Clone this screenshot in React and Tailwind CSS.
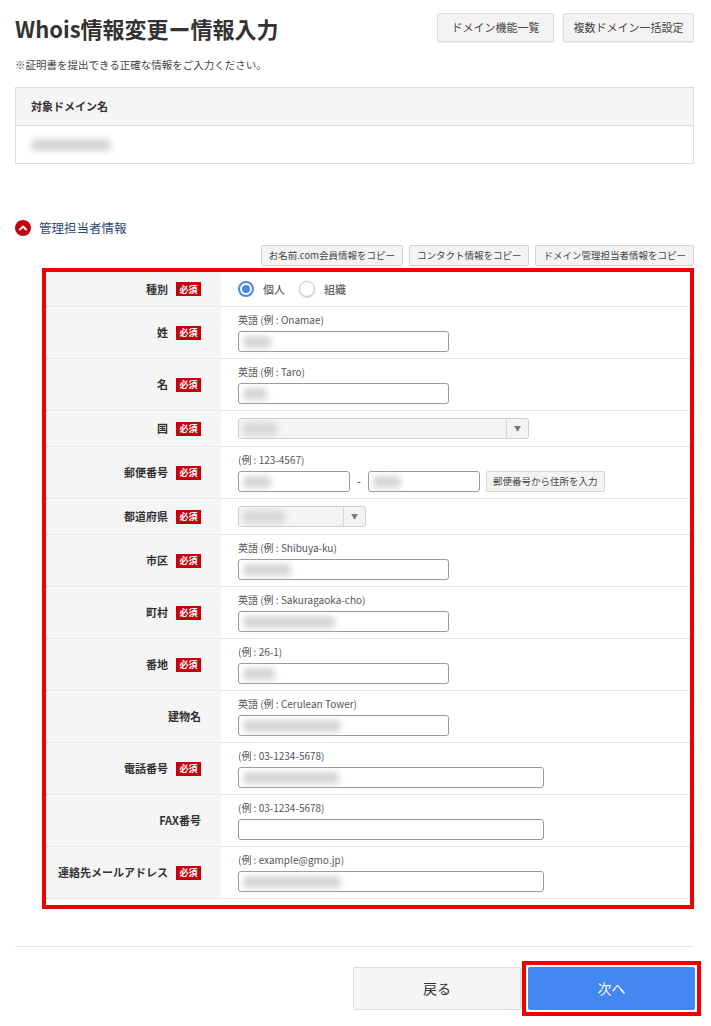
import { ChevronUp } from "lucide-react";

const font = { fontFamily: '"Noto Sans CJK JP", "Noto Sans", sans-serif' };

function Blur({ w }) {
  return <div className="h-[12px] rounded-sm bg-[#d6d6d6] blur-[3px]" style={{ width: w }} />;
}

function Badge() {
  return (
    <span className="ml-[8px] inline-flex h-[14px] w-[25px] items-center justify-center bg-[#c4000b] text-[9px] leading-none text-white">
      必須
    </span>
  );
}

function TextInput({ w = 211, blur }) {
  return (
    <div
      className="flex h-[21px] items-center rounded-[3px] border border-[#999] bg-white px-[4px]"
      style={{ width: w }}
    >
      {blur ? <Blur w={blur} /> : null}
    </div>
  );
}

function Select({ w, blur }) {
  return (
    <div
      className="flex h-[21px] items-center rounded-[3px] border border-[#d0d0d0] bg-[#f4f4f4]"
      style={{ width: w }}
    >
      <div className="flex flex-1 items-center px-[4px]">
        <Blur w={blur} />
      </div>
      <div className="flex h-full w-[22px] items-center justify-center border-l border-[#d6d6d6] text-[7px] text-[#777]">
        ▼
      </div>
    </div>
  );
}

function Row({ label, required, hint, tall = true, children }) {
  return (
    <div className="flex border-b border-dotted border-[#cfcfcf]">
      <div className="flex w-[175px] shrink-0 items-center justify-end bg-[#f5f5f5] pr-[20px] text-[11px] font-bold text-[#333]">
        <span>{label}</span>
        {required ? <Badge /> : null}
      </div>
      <div className={`flex-1 pl-[17px] ${tall ? "py-[6px]" : "py-[7px]"}`}>
        {hint ? (
          <div className="mb-[4px] text-[10px] leading-[14px] text-[#555]">{hint}</div>
        ) : null}
        {children}
      </div>
    </div>
  );
}

function SmallButton({ children }) {
  return (
    <button className="h-[21px] rounded-[2px] border border-[#d4d4d4] bg-[#f3f3f3] px-[7px] text-[9.5px] text-[#444]">
      {children}
    </button>
  );
}

export default function App() {
  return (
    <div className="min-h-[1026px] w-[711px] bg-white pl-[15px] pr-[17px] pt-[13px] text-[#333]" style={font}>
      <div className="flex items-start justify-between">
        <h1 className="mt-[1px] text-[22px] font-bold leading-[28px] text-[#333]">
          Whois情報変更ー情報入力
        </h1>
        <div className="flex gap-[9px]">
          <button className="h-[29px] w-[117px] rounded-[2px] border border-[#ddd] bg-[#f3f3f3] text-[11px] text-[#444] shadow-[0_1px_1px_rgba(0,0,0,0.08)]">
            ドメイン機能一覧
          </button>
          <button className="h-[29px] w-[131px] rounded-[2px] border border-[#ddd] bg-[#f3f3f3] text-[11px] text-[#444] shadow-[0_1px_1px_rgba(0,0,0,0.08)]">
            複数ドメイン一括設定
          </button>
        </div>
      </div>

      <p className="mt-[16px] text-[10.5px] leading-[14px] text-[#444]">
        ※証明書を提出できる正確な情報をご入力ください。
      </p>

      <div className="mt-[15px] border border-[#ddd]">
        <div className="flex h-[38px] items-center border-b border-[#ddd] bg-[#f5f5f5] px-[15px] text-[11px] font-bold">
          対象ドメイン名
        </div>
        <div className="flex h-[37px] items-center px-[15px]">
          <Blur w={80} />
        </div>
      </div>

      <div className="mt-[55px] flex items-center gap-[8px]">
        <span className="flex h-[16px] w-[16px] items-center justify-center rounded-full bg-[#c4000b] text-white">
          <ChevronUp size={12} strokeWidth={4} />
        </span>
        <span className="text-[12.5px] leading-[18px] text-[#2b4a78]">管理担当者情報</span>
      </div>

      <div className="mt-[8px] flex justify-end gap-[6px]">
        <SmallButton>お名前.com会員情報をコピー</SmallButton>
        <SmallButton>コンタクト情報をコピー</SmallButton>
        <SmallButton>ドメイン管理担当者情報をコピー</SmallButton>
      </div>

      <div className="ml-[27px] mt-[2px] border-[4px] border-[#ee0000] pb-[6px]">
        <Row label="種別" required tall={false}>
          <div className="flex h-[20px] items-center text-[11px] text-[#444]">
            <span className="flex h-[16px] w-[16px] items-center justify-center rounded-full border-2 border-[#4a86e8] bg-white">
              <span className="h-[8px] w-[8px] rounded-full bg-[#4a86e8]" />
            </span>
            <span className="ml-[9px]">個人</span>
            <span className="ml-[14px] h-[16px] w-[16px] rounded-full border border-[#c8c8c8] bg-white shadow-[0_1px_2px_rgba(0,0,0,0.15)]" />
            <span className="ml-[9px]">組織</span>
          </div>
        </Row>
        <Row label="姓" required hint="英語 (例 : Onamae)">
          <TextInput blur={28} />
        </Row>
        <Row label="名" required hint="英語 (例 : Taro)">
          <TextInput blur={24} />
        </Row>
        <Row label="国" required tall={false}>
          <Select w={291} blur={34} />
        </Row>
        <Row label="郵便番号" required hint="(例 : 123-4567)">
          <div className="flex items-center">
            <TextInput w={112} blur={28} />
            <span className="mx-[7px] w-[4px] text-[11px]">-</span>
            <TextInput w={112} blur={28} />
            <button className="ml-[6px] h-[21px] rounded-[2px] border border-[#d4d4d4] bg-[#f3f3f3] px-[6px] text-[9.5px] text-[#444]">
              郵便番号から住所を入力
            </button>
          </div>
        </Row>
        <Row label="都道府県" required tall={false}>
          <Select w={128} blur={42} />
        </Row>
        <Row label="市区" required hint="英語 (例 : Shibuya-ku)">
          <TextInput blur={48} />
        </Row>
        <Row label="町村" required hint="英語 (例 : Sakuragaoka-cho)">
          <TextInput blur={92} />
        </Row>
        <Row label="番地" required hint="(例 : 26-1)">
          <TextInput blur={32} />
        </Row>
        <Row label="建物名" hint="英語 (例 : Cerulean Tower)">
          <TextInput blur={98} />
        </Row>
        <Row label="電話番号" required hint="(例 : 03-1234-5678)">
          <TextInput w={306} blur={96} />
        </Row>
        <Row label="FAX番号" hint="(例 : 03-1234-5678)">
          <TextInput w={306} />
        </Row>
        <Row label="連絡先メールアドレス" required hint="(例 : example@gmo.jp)">
          <TextInput w={306} blur={98} />
        </Row>
      </div>

      <div className="mt-[37px] border-t border-[#e6e6e6]" />

      <div className="-mr-[7px] mt-[14px] flex items-center justify-end gap-[1px]">
        <button className="h-[43px] w-[168px] rounded-[2px] border border-[#ddd] bg-[#f5f5f5] text-[14px] text-[#333]">
          戻る
        </button>
        <div className="border-[4px] border-[#ee0000] bg-white p-[2px]">
          <button className="block h-[43px] w-[167px] rounded-[2px] bg-[#4387f2] text-[14px] text-white">
            次へ
          </button>
        </div>
      </div>
    </div>
  );
}
